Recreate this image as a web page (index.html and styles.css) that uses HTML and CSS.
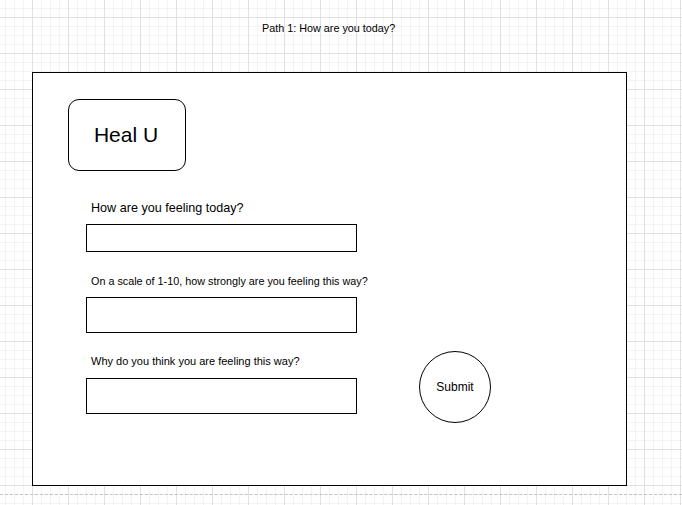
FILE: index.html
```html
<!DOCTYPE html>
<html>
<head>
<meta charset="utf-8">
<link rel="stylesheet" href="styles.css">
</head>
<body>
<div class="canvas">
  <header class="title">Path 1: How are you today?</header>
  <section class="frame">
    <div class="logo">Heal U</div>
    <div class="content">
      <div class="form">
        <div class="label label-lg">How are you feeling today?</div>
        <div class="field field-sm"></div>
        <div class="label label-2">On a scale of 1-10, how strongly are you feeling this way?</div>
        <div class="field"></div>
        <div class="label label-3">Why do you think you are feeling this way?</div>
        <div class="field"></div>
      </div>
      <div class="submit">Submit</div>
    </div>
  </section>
  <div class="pagebreak"></div>
</div>
</body>
</html>
```

FILE: styles.css
```css
html, body {
  margin: 0;
  padding: 0;
  width: 682px;
  height: 505px;
  overflow: hidden;
}

body {
  font-family: "Liberation Sans", Arial, sans-serif;
  color: #000;
  background-color: #fff;
  background-image:
    linear-gradient(to right, #e0e0e0 1px, transparent 1px),
    linear-gradient(to bottom, #e0e0e0 1px, transparent 1px),
    linear-gradient(to right, #f4f4f4 1px, transparent 1px),
    linear-gradient(to bottom, #f4f4f4 1px, transparent 1px);
  background-size: 36px 36px, 36px 36px, 9px 9px, 9px 9px;
  background-position: 32px 17px, 32px 17px, 5px 8px, 5px 8px;
}

.canvas {
  display: flex;
  flex-direction: column;
}

.title {
  height: 72px;
  box-sizing: border-box;
  padding-top: 21px;
  padding-left: 262px;
  font-size: 10.8px;
  line-height: 14px;
}

.frame {
  margin-left: 32px;
  width: 595px;
  height: 414px;
  box-sizing: border-box;
  border: 1px solid #000;
  background: #fff;
  padding: 26px 0 0 35px;
  display: flex;
  flex-direction: column;
}

.logo {
  width: 118px;
  height: 72px;
  box-sizing: border-box;
  border: 1px solid #000;
  border-radius: 11px;
  display: flex;
  align-items: center;
  justify-content: center;
  font-size: 21px;
  padding-right: 2px;
}

.content {
  display: flex;
  margin-left: 18px;
  margin-top: 28px;
}

.form {
  display: flex;
  flex-direction: column;
  width: 271px;
}

.label {
  padding-left: 5px;
  font-size: 10.8px;
  line-height: 14px;
  white-space: nowrap;
  margin-bottom: 9px;
}

.label-lg {
  font-size: 12.6px;
  line-height: 16px;
  margin-top: 1px;
  margin-bottom: 8px;
}

.label-2 {
  margin-top: 22px;
}

.label-3 {
  font-size: 11px;
  margin-top: 21px;
  margin-bottom: 10px;
}

.field {
  height: 36px;
  box-sizing: border-box;
  border: 1px solid #000;
  background: #fff;
}

.field-sm {
  height: 28px;
}

.submit {
  margin-left: 62px;
  margin-top: 152px;
  width: 72px;
  height: 72px;
  box-sizing: border-box;
  border: 1px solid #000;
  border-radius: 50%;
  display: flex;
  align-items: center;
  justify-content: center;
  font-size: 12px;
}

.pagebreak {
  margin-top: 8px;
  height: 0;
  border-top: 1px dashed #c4c4c4;
}
```
